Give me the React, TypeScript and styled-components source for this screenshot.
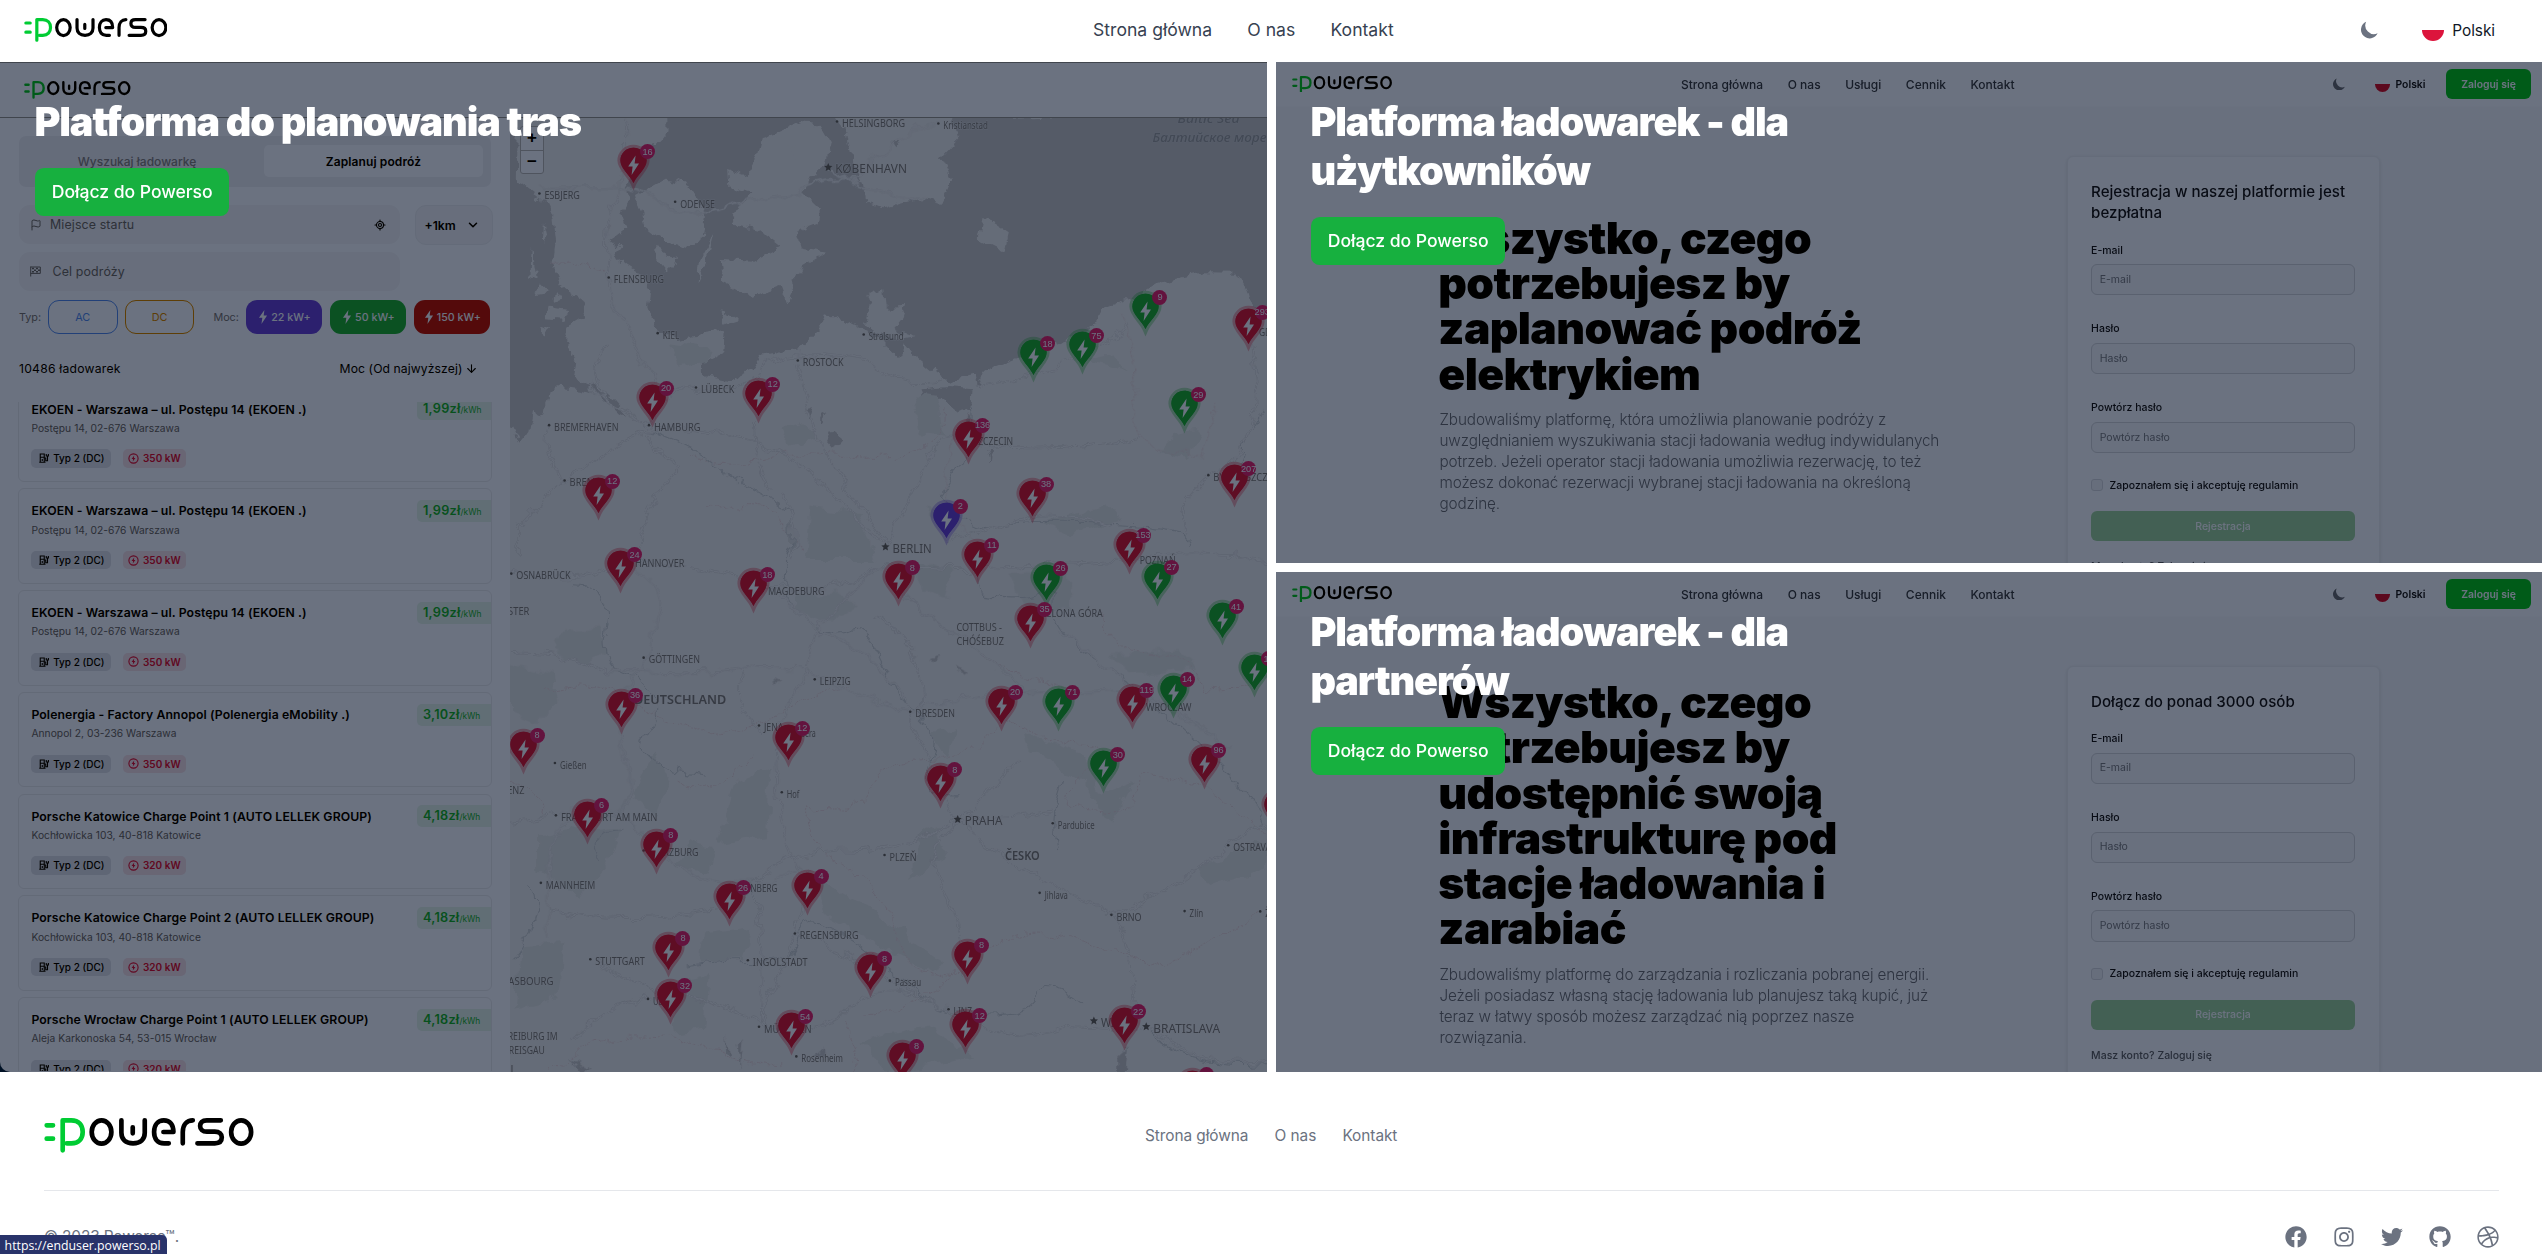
import React from "react";
import styled, { createGlobalStyle } from "styled-components";
import { Flag, LocateFixed, ChevronDown, ArrowDown } from "lucide-react";
import { FaFacebook, FaInstagram, FaTwitter, FaGithub, FaDribbble } from "react-icons/fa";

const GlobalStyle = createGlobalStyle`
  *, *::before, *::after { box-sizing: border-box; }
  html, body { margin: 0; background: #fff; }
  body { font-family: Inter, "Liberation Sans", sans-serif; overflow: hidden; }
`;

const Page = styled.div`
  width: 2542px;
  height: 1254px;
  overflow: hidden;
  display: flex;
  flex-direction: column;
  background: #fff;
`;

/* ---------- brand ---------- */

const LogoSvg = styled.svg<{ $w: number }>`
  display: block;
  flex: none;
  width: ${(p) => p.$w}px;
  height: ${(p) => (p.$w * 104) / 628}px;
  fill: none;
  stroke-linecap: round;
  stroke-linejoin: round;
`;

const Logo = ({ width }: { width: number }) => (
  <LogoSvg $w={width} viewBox="0 0 628 104" role="img" aria-label="Powerso">
    <g stroke="#00cc33" strokeWidth={14}>
      <path d="M8 22H27M8 62H27" />
      <path d="M56 97V7H82C104 7 116 22 116 42C116 62 104 76 82 76H68" />
    </g>
    <g stroke="#000" strokeWidth={14}>
      <ellipse cx="172.5" cy="42" rx="29.5" ry="35" />
      <path d="M232 7V44C232 64 245 76 267 76C289 76 302 64 302 44V7M266 28V46" />
      <path d="M374 76H360C340 76 330 62 330 42C330 20 342 7 359 7C378 7 388 20 388 42H358" />
      <path d="M416 76V42C416 20 428 7 446 7" />
      <path d="M530 7H488C474 7 468 15 468 24C468 34 475 41 488 41H512C526 41 533 48 533 58C533 70 526 76 512 76H460" />
      <ellipse cx="591" cy="42" rx="30" ry="35" />
    </g>
  </LogoSvg>
);

const MoonSvg = styled.svg<{ $s: number }>`
  width: ${(p) => p.$s}px;
  height: ${(p) => p.$s}px;
  flex: none;
`;
const Moon = ({ size, color }: { size: number; color: string }) => (
  <MoonSvg $s={size} viewBox="2 2 16 16" fill={color}>
    <path d="M17.293 13.293A8 8 0 016.707 2.707a8.001 8.001 0 1010.586 10.586z" />
  </MoonSvg>
);

const PolishFlag = styled.span<{ $s: number }>`
  width: ${(p) => p.$s}px;
  height: ${(p) => p.$s}px;
  flex: none;
  border-radius: 50%;
  background: linear-gradient(#fff 50%, #dc143c 50%);
`;

/* ---------- page header ---------- */

const Header = styled.header`
  height: 62px;
  flex: none;
  display: flex;
  align-items: center;
  padding: 0 47px 2px 23.5px;
`;
const HeaderNav = styled.nav`
  display: flex;
  gap: 35.2px;
  margin-left: 926px;
  margin-right: auto;
`;
const HeaderLink = styled.a`
  font-size: 17.6px;
  color: #374151;
  line-height: 26px;
`;
const HeaderLanguage = styled.div`
  display: flex;
  align-items: center;
  gap: 8.5px;
  margin-left: 43.5px;
  font-size: 15.4px;
  color: #111827;
  letter-spacing: -0.05px;
`;

/* ---------- hero panels ---------- */

const Panels = styled.main`
  flex: none;
  height: 1010px;
  display: grid;
  grid-template-columns: 1267px 1266px;
  column-gap: 9px;
`;
const RightColumn = styled.div`
  display: grid;
  grid-template-rows: 501px 500px;
  row-gap: 9px;
`;
const Panel = styled.section`
  position: relative;
  isolation: isolate;
  overflow: hidden;
  background: #fff;
`;
const Preview = styled.div`
  height: 100%;
  overflow: hidden;
`;
const PlannerFrame = styled.div`
  height: 100%;
  background: #00264a;
`;
const PlannerScreen = styled.div`
  height: 100%;
  overflow: hidden;
  background: #fff;
  border-bottom-left-radius: 10px;
`;
const Tint = styled.div`
  position: absolute;
  inset: 0;
  background: #6b7280;
  mix-blend-mode: multiply;
`;
const Caption = styled.div`
  position: absolute;
  inset: 0;
  padding: 35.8px 35.2px;
  display: flex;
  flex-direction: column;
  align-items: flex-start;
  gap: 21.4px;
`;
const CaptionTitle = styled.h1`
  margin: 0 0 0 -0.8px;
  font-size: 39.6px;
  line-height: 49px;
  font-weight: 900;
  letter-spacing: -1.1px;
  color: #fff;
  white-space: nowrap;
`;
const JoinButton = styled.a`
  height: 47.6px;
  width: 194px;
  display: flex;
  align-items: center;
  justify-content: center;
  border-radius: 8.8px;
  background: #17b03f;
  color: #fff;
  font-size: 17.6px;
  font-weight: 500;
  letter-spacing: -0.04px;
`;

/* ---------- planner preview ---------- */

const PlannerBar = styled.div`
  height: 56px;
  display: flex;
  align-items: flex-start;
  padding: 18px 24px 0;
  border-top: 1px solid #999;
  border-bottom: 1px solid #999;
`;
const PlannerBody = styled.div`
  display: flex;
  height: 954px;
`;
const Sidebar = styled.aside`
  width: 510px;
  flex: none;
  padding: 18px 0 0 19px;
  overflow: hidden;
  color: #000;
`;
const Tabs = styled.div`
  width: 472px;
  height: 51px;
  padding: 9px 8px 10px;
  display: grid;
  grid-template-columns: 220px 219px;
  gap: 17px;
  border-radius: 7px;
  background: #f1f1f4;
`;
const Tab = styled.div<{ $active?: boolean }>`
  display: flex;
  align-items: center;
  justify-content: center;
  border-radius: 5px;
  font-size: 12px;
  font-weight: ${(p) => (p.$active ? 600 : 500)};
  letter-spacing: ${(p) => (p.$active ? 0.1 : 0)}px;
  background: ${(p) => (p.$active ? "#fff" : "transparent")};
  color: ${(p) => (p.$active ? "#000" : "#85858c")};
`;
const FieldRow = styled.div<{ $top: number }>`
  display: flex;
  gap: 15px;
  margin-top: ${(p) => p.$top}px;
`;
const PlaceField = styled.div`
  width: 381px;
  height: 39px;
  padding: 0 14px 0 11px;
  display: flex;
  align-items: center;
  gap: 8px;
  border-radius: 11px;
  background: #f7f7f8;
  color: #6c6c70;
  font-size: 12.4px;
  letter-spacing: 0.12px;
`;
const FieldEnd = styled.span`
  margin-left: auto;
  display: flex;
  color: #000;
`;
const Radius = styled.div`
  width: 78px;
  height: 40px;
  display: flex;
  align-items: center;
  padding-left: 8.5px;
  gap: 10px;
  border-radius: 11px;
  border: 1px solid #efeff1;
  background: #f7f7f8;
  font-size: 12.2px;
  font-weight: 600;
`;
const FilterRow = styled.div`
  display: flex;
  align-items: center;
  margin-top: 9px;
  height: 34px;
  font-size: 10.8px;
  color: #77777c;
`;
const FilterLabel = styled.span<{ $w: number; $left?: number }>`
  width: ${(p) => p.$w}px;
  margin-left: ${(p) => p.$left ?? 0}px;
`;
const CurrentPill = styled.span<{ $c: string }>`
  width: 69.5px;
  height: 34px;
  margin-right: 7.3px;
  display: flex;
  align-items: center;
  justify-content: center;
  border: 1px solid ${(p) => p.$c};
  border-radius: 11px;
  color: ${(p) => p.$c};
`;
const PowerPill = styled.span<{ $c: string }>`
  width: 76px;
  height: 34px;
  margin-right: 8px;
  display: flex;
  align-items: center;
  justify-content: center;
  gap: 3px;
  border-radius: 11px;
  background: ${(p) => p.$c};
  color: #fff;
  font-size: 10.7px;
  font-weight: 500;
`;
const SortRow = styled.div`
  height: 68px;
  padding-right: 32px;
  width: 490px;
  display: flex;
  align-items: center;
  justify-content: space-between;
  font-size: 12.2px;
  letter-spacing: 0.08px;
`;
const StationCount = styled.span`
  letter-spacing: 0.22px;
`;
const SortBy = styled.span`
  display: flex;
  align-items: center;
  gap: 2.5px;
  margin-right: -1px;
`;
const StationList = styled.div`
  width: 474px;
  margin-left: -1px;
  height: 669px;
  overflow: hidden;
`;
const StationStack = styled.div`
  margin-top: -15.4px;
  display: flex;
  flex-direction: column;
  gap: 6.25px;
`;
const Station = styled.article`
  height: 95.5px;
  flex: none;
  display: flex;
  justify-content: space-between;
  border: 1px solid #ececee;
  border-radius: 6px;
  padding-left: 12.4px;
`;
const StationInfo = styled.div`
  padding-top: 13.9px;
`;
const StationName = styled.div`
  font-size: 12.25px;
  line-height: 16.4px;
  font-weight: 600;
  letter-spacing: 0.1px;
  white-space: nowrap;
`;
const StationAddress = styled.div`
  font-size: 10.25px;
  line-height: 20px;
  letter-spacing: 0.03px;
  color: #66666b;
`;
const Chips = styled.div`
  margin-top: 11.4px;
  display: flex;
  gap: 12px;
`;
const Chip = styled.span<{ $hot?: boolean }>`
  height: 18.4px;
  width: ${(p) => (p.$hot ? 63.7 : 79.3)}px;
  padding-left: ${(p) => (p.$hot ? 5.5 : 8)}px;
  display: flex;
  align-items: center;
  gap: 3.8px;
  border-radius: 5px;
  font-size: 10px;
  font-weight: ${(p) => (p.$hot ? 600 : 500)};
  background: ${(p) => (p.$hot ? "#f9e3e8" : "#e2e4e9")};
  color: ${(p) => (p.$hot ? "#e60f41" : "#000")};
  white-space: nowrap;
`;
const Price = styled.div`
  margin-top: 10.8px;
  height: 22px;
  width: 74px;
  padding-left: 6px;
  display: flex;
  align-items: baseline;
  line-height: 21px;
  border-radius: 5px 0 0 5px;
  background: #e6f5ea;
  color: #10b53a;
  font-size: 12.7px;
  font-weight: 600;
  letter-spacing: 0.25px;
`;
const Unit = styled.small`
  font-size: 8.4px;
  font-weight: 400;
  letter-spacing: 0;
`;

const Bolt = styled.svg`
  width: 10px;
  height: 14px;
`;
const BoltIcon = () => (
  <Bolt viewBox="0 0 11 19" fill="#fff">
    <path d="M7.4 0L0 10.6H4.6L3.4 19L11 7.6H6.4Z" />
  </Bolt>
);

const FinishFlag = () => (
  <svg width="11" height="11" viewBox="0 0 11 11" fill="none" stroke="#6c6c70">
    <path d="M0.7 0.5V10.5M0.7 1H10.3V7.4H0.7" />
    <path d="M2 2.6H4M6 2.6H8M4 4.2H6M8 4.2H10M2 5.8H4M6 5.8H8" strokeWidth="1.5" />
  </svg>
);

const ChargerIcon = () => (
  <svg width="10" height="10" viewBox="0 0 20 20" fill="none" stroke="currentColor" strokeWidth="2.2">
    <path d="M2.5 18V2H10.5V18M0.5 18.5H13M2.5 8.5H10.5M6.5 12V16" />
    <path d="M10.5 10H13.5V15.5H17V7M14.5 2V6H18.8V2" />
  </svg>
);

const PowerIcon = () => (
  <svg width="11" height="11" viewBox="0 0 22 22" fill="none" stroke="currentColor" strokeWidth="2.2">
    <circle cx="11" cy="11" r="9.2" />
    <path d="M12.4 4.8L7.2 12H10.2L9.6 17.2L14.8 10H11.8Z" fill="currentColor" stroke="none" />
  </svg>
);

const stations: [string, string, string, string][] = [
  ["EKOEN - Warszawa – ul. Postępu 14 (EKOEN .)", "Postępu 14, 02-676 Warszawa", "350 kW", "1,99"],
  ["EKOEN - Warszawa – ul. Postępu 14 (EKOEN .)", "Postępu 14, 02-676 Warszawa", "350 kW", "1,99"],
  ["EKOEN - Warszawa – ul. Postępu 14 (EKOEN .)", "Postępu 14, 02-676 Warszawa", "350 kW", "1,99"],
  ["Polenergia - Factory Annopol (Polenergia eMobility .)", "Annopol 2, 03-236 Warszawa", "350 kW", "3,10"],
  ["Porsche Katowice Charge Point 1 (AUTO LELLEK GROUP)", "Kochłowicka 103, 40-818 Katowice", "320 kW", "4,18"],
  ["Porsche Katowice Charge Point 2 (AUTO LELLEK GROUP)", "Kochłowicka 103, 40-818 Katowice", "320 kW", "4,18"],
  ["Porsche Wrocław Charge Point 1 (AUTO LELLEK GROUP)", "Aleja Karkonoska 54, 53-015 Wrocław", "320 kW", "4,18"],
];

/* ---------- map ---------- */

const MapBox = styled.div`
  position: relative;
  width: 757px;
  height: 954px;
  overflow: hidden;
  background: #f1f1ef;
`;
const MapSvg = styled.svg`
  display: block;
  width: 757px;
  height: 954px;
`;
const ZoomControl = styled.div`
  position: absolute;
  left: 10px;
  top: 8px;
  width: 24px;
  height: 48px;
  display: grid;
  grid-template-rows: 1fr 1fr;
  border: 1px solid #bbb;
  border-radius: 3px;
  background: #fff;
  font: 700 17px/22px "Liberation Sans", sans-serif;
  text-align: center;
`;
const ZoomKey = styled.span`
  & + & { border-top: 1px solid #bbb; }
`;
const Pin = styled.div`
  position: absolute;
  width: 33px;
  height: 44px;
`;
const PinSvg = styled.svg`
  display: block;
  width: 33px;
  height: 44px;
  overflow: visible;
`;
const PinCount = styled.span`
  position: absolute;
  left: 23px;
  top: 0px;
  width: 15px;
  height: 15px;
  border-radius: 50%;
  display: flex;
  align-items: center;
  justify-content: center;
  background: #ec2a7c;
  color: #fff;
  font: 9.2px "Liberation Sans", Arial, sans-serif;
`;

/* Two tracing grids: the northern and the southern half of the map. */
type Half = "n" | "s";
const mx = (x: number) => x / 2.063;
const my = (h: Half, y: number) => (h === "n" ? y / 3 - 58 : y / 2.904 + 422);

const R = "#e11d48";
const G = "#18b544";
const B = "#6747dc";
const pins: [Half, number, number, string, string][] = [
  ["n", 255, 370, R, "16"], ["n", 1312, 806, G, "9"], ["n", 1523, 851, R, "293"], ["n", 1181, 922, G, "75"],
  ["n", 1080, 946, G, "18"], ["n", 1391, 1098, G, "29"], ["n", 293, 1079, R, "20"], ["n", 513, 1067, R, "12"],
  ["n", 946, 1190, R, "136"], ["n", 182, 1358, R, "12"], ["n", 1077, 1367, R, "38"], ["n", 1495, 1320, R, "207"],
  ["n", 900, 1433, B, "2"], ["s", 228, 134, R, "24"], ["s", 502, 192, R, "18"], ["s", 801, 172, R, "8"],
  ["s", 965, 107, R, "11"], ["s", 1107, 173, G, "26"], ["s", 1277, 77, R, "153"], ["s", 1336, 170, G, "27"],
  ["s", 1469, 285, G, "41"], ["s", 1074, 293, R, "35"], ["s", 1536, 437, G, "17"], ["s", 1285, 528, R, "119"],
  ["s", 1368, 496, G, "14"], ["s", 1131, 533, G, "71"], ["s", 1013, 533, R, "20"], ["s", 229, 543, R, "36"],
  ["s", 574, 638, R, "12"], ["s", 27, 658, R, "8"], ["s", 1225, 715, G, "30"], ["s", 1433, 702, R, "96"],
  ["s", 889, 758, R, "8"], ["s", 160, 862, R, "6"], ["s", 303, 949, R, "8"], ["s", 452, 1101, R, "26"],
  ["s", 613, 1068, R, "4"], ["s", 328, 1248, R, "8"], ["s", 744, 1308, R, "8"], ["s", 944, 1268, R, "8"],
  ["s", 332, 1386, R, "32"], ["s", 580, 1476, R, "54"], ["s", 940, 1473, R, "12"], ["s", 1267, 1461, R, "22"],
  ["s", 810, 1562, R, "8"], ["s", 1409, 1644, R, "8"], ["s", 1584, 834, R, "8"],
];

/* half, text, left, middle, width, kind */
const towns: [Half, string, number, number, number, ("c" | "t" | "k" | "n" | "x")?][] = [
  ["n", "HELSINGBORG", 685, 191, 130, "t"], ["n", "Kristianstad", 894, 197, 92, "t"], ["n", "KØBENHAVN", 671, 327, 148, "k"],
  ["n", "ESBJERG", 71, 407, 73], ["n", "ODENSE", 351, 432, 72], ["n", "FLENSBURG", 214, 659, 104], ["n", "KIEL", 315, 826, 34],
  ["n", "Stralsund", 740, 830, 72], ["n", "ROSTOCK", 604, 908, 84], ["n", "LÜBECK", 394, 989, 69], ["n", "HAMBURG", 297, 1102, 96],
  ["n", "BREMERHAVEN", 91, 1102, 133], ["n", "SZCZECIN", 956, 1145, 82, "x"], ["n", "BREMEN", 123, 1268, 78], ["n", "BYDGOSZCZ", 1451, 1252, 112],
  ["n", "GDAŃSK", 1545, 817, 70, "x"],
  ["s", "BERLIN", 789, 25, 81, "k"], ["s", "OSNABRÜCK", 13, 104, 112], ["s", "HANNOVER", 258, 69, 102, "x"], ["s", "MAGDEBURG", 532, 150, 117, "x"],
  ["s", "POZNAŃ", 1299, 59, 74, "x"], ["s", "MÜNSTER", -50, 207, 90, "x"], ["s", "COTTBUS -", 921, 254, 94, "x"], ["s", "CHÓŚEBUZ", 921, 295, 98, "x"],
  ["s", "ZIELONA GÓRA", 1090, 214, 133, "x"], ["s", "GÖTTINGEN", 286, 348, 106], ["s", "LEIPZIG", 639, 411, 64], ["s", "DEUTSCHLAND", 256, 463, 190, "n"],
  ["s", "WROCŁAW", 1312, 486, 94, "x"], ["s", "DRESDEN", 836, 505, 82], ["s", "JENA", 524, 545, 40], ["s", "Gera", 598, 561, 33, "x"],
  ["s", "Gießen", 103, 654, 55], ["s", "KOBLENZ", -54, 728, 84, "x"], ["s", "Hof", 571, 739, 26], ["s", "FRANKFURT AM MAIN", 105, 806, 199],
  ["s", "PRAHA", 938, 816, 78, "k"], ["s", "Pardubice", 1130, 829, 76], ["s", "OSTRAVA", 1492, 893, 78], ["s", "WÜRZBURG", 286, 908, 103],
  ["s", "PLZEŇ", 783, 921, 56], ["s", "ČESKO", 1021, 917, 72, "n"], ["s", "MANNHEIM", 74, 1002, 102], ["s", "NÜRNBERG", 460, 1013, 92, "x"],
  ["s", "Jihlava", 1103, 1031, 48], ["s", "BRNO", 1251, 1095, 52], ["s", "Zlín", 1402, 1084, 28], ["s", "Ž", 1558, 1085, 10], ["s", "REGENSBURG", 598, 1149, 121],
  ["s", "STUTTGART", 176, 1224, 102], ["s", "INGOLSTADT", 501, 1227, 113], ["s", "STRASBOURG", -38, 1283, 128, "x"], ["s", "Passau", 794, 1286, 54],
  ["s", "ULM", 295, 1339, 34], ["s", "LINZ", 915, 1369, 38], ["s", "WIEN", 1219, 1401, 58, "k"], ["s", "BRATISLAVA", 1327, 1418, 138, "k"],
  ["s", "MÜNCHEN", 524, 1420, 98], ["s", "FREIBURG IM", -14, 1442, 112, "x"], ["s", "BREISGAU", -14, 1483, 86, "x"], ["s", "Rosenheim", 601, 1506, 86],
  ["s", "BASEL", -50, 1536, 62, "x"],
];

const roads: [Half, string][] = [
  ["n", "M235 180Q250 260 225 360L225 400Q195 470 200 580T210 720Q250 810 270 900Q320 1000 285 1095"],
  ["n", "M60 385L215 382Q280 385 320 440L410 460Q500 410 600 400Q610 350 720 360M655 325Q730 410 860 412M720 350Q760 260 885 185"],
  ["n", "M285 1095Q200 1050 165 970M285 1100Q330 960 385 985Q470 1010 520 930T740 905Q780 990 900 960"],
  ["n", "M110 1265Q180 1190 285 1110M285 1110Q400 1100 510 1150T720 1390L775 1460M590 905Q620 1100 650 1180Q700 1300 775 1450"],
  ["n", "M80 1095Q60 1170 110 1265M285 1120Q300 1180 350 1220Q280 1330 260 1500M500 1080Q500 1200 540 1290"],
  ["n", "M775 1460Q830 1300 860 1200T960 1150M960 980Q1030 960 1080 945T1280 800M960 1150Q1130 1180 1300 1130"],
  ["n", "M1530 860Q1550 1000 1530 1100T1440 1250Q1370 1330 1400 1420M900 1440Q1000 1400 1080 1370Q1170 1360 1250 1400"],
  ["n", "M555 1290Q600 1380 580 1500M110 1265Q60 1330 20 1400V1500M200 1020Q150 930 200 850"],
  ["s", "M0 95Q150 130 230 70Q350 60 500 120T780 70Q900 90 1030 80T1270 60Q1400 20 1560 60"],
  ["s", "M230 70Q320 120 310 200T270 380Q200 480 240 640T150 820Q60 840 80 1000V1160"],
  ["s", "M270 380Q400 390 480 370T640 400T820 500Q900 460 1010 450T1290 430Q1400 520 1480 600"],
  ["s", "M780 70Q690 160 650 240T610 400Q540 500 550 700T600 960Q520 1010 430 990T270 850T100 790"],
  ["s", "M820 500Q860 620 920 800Q840 900 700 900T500 1000Q530 1200 520 1400M920 800Q1010 820 1120 790"],
  ["s", "M920 810Q1010 930 1120 1000T1240 1090Q1290 1160 1290 1400M920 810Q1000 740 1040 640"],
  ["s", "M80 1070Q200 1110 340 1090T500 1010M170 1220Q280 1300 350 1320T520 1400T700 1360T910 1370T1150 1410L1320 1420"],
  ["s", "M590 1140Q700 1200 790 1280T910 1360M590 1140Q560 1250 520 1400M1240 1090Q1350 1040 1480 890L1560 820"],
  ["s", "M820 500Q800 380 690 300T560 150M780 70Q820 200 920 270Q1000 350 1060 440M1130 260Q1200 330 1280 430"],
  ["s", "M0 330Q100 320 200 380L280 380M480 370Q450 480 520 560M620 960Q600 1060 590 1140M0 820L90 800"],
  ["s", "M285 1330Q200 1340 130 1450M1320 1420Q1420 1540 1560 1510M940 1260Q930 1100 890 1000T920 820M750 220Q860 300 850 500"],
];
const rivers: [Half, string][] = [
  ["n", "M285 1110Q380 1160 430 1220T580 1350V1500"],
  ["n", "M950 1040Q960 1160 890 1300Q940 1420 1000 1400T1240 1390T1400 1450"],
  ["n", "M1555 1050Q1500 1160 1510 1250"],
  ["s", "M580 0Q540 150 600 220T700 260T800 460Q900 540 870 640T920 740"],
  ["s", "M1290 430L1180 320Q1100 220 1120 150Q1060 180 970 160L960 60"],
  ["s", "M1290 430Q1400 560 1470 660T1560 830M240 840Q150 830 190 930"],
  ["s", "M40 1000Q80 1080 0 1220M360 1240Q450 1220 520 1225T600 1140T760 1220T910 1370"],
  ["s", "M930 1370Q1060 1400 1080 1330T1180 1350M1320 1430Q1400 1540 1560 1520M1140 700Q1110 820 1130 900"],
  ["s", "M130 130Q220 140 200 260T260 400Q330 470 280 560T400 680"],
];
const borders: [Half, string][] = [
  ["n", "M90 610Q140 605 195 640"],
  ["n", "M950 1060Q900 1160 900 1270T960 1450M1260 760Q1300 900 1290 1050T1430 1180L1460 1020"],
  ["n", "M370 1190Q470 1230 510 1200T720 1190T900 1050M400 1350Q520 1310 560 1370L600 1480"],
  ["s", "M1015 520Q960 640 860 640T740 720T620 770Q590 860 690 950T800 1150T910 1270Q950 1230 1000 1180Q1060 1130 1140 1150T1320 1240Q1450 1180 1540 1080"],
  ["s", "M1020 520Q1130 600 1200 600T1180 690T1260 790Q1300 730 1300 680Q1440 700 1480 770L1560 850"],
  ["s", "M70 440Q180 400 240 460T400 560Q480 560 560 500T700 420M350 700Q420 760 500 620"],
  ["s", "M690 1400Q740 1500 700 1540M730 1380Q840 1360 910 1270M970 330Q1060 420 1180 430M0 700Q90 760 70 800"],
  ["s", "M90 1540Q160 1440 260 1440T420 1480T560 1530M1210 200Q1240 330 1320 330T1420 400T1560 400"],
];
const woods: [Half, string][] = [
  ["n", "M330 850L420 870L410 900L350 920ZM560 1100L600 1080L640 1130L580 1160ZM830 1000L850 1120L900 1130L880 1010ZM1370 1120L1420 1110L1400 1200L1340 1180Z"],
  ["n", "M1100 1390L1230 1330L1260 1380L1150 1420ZM860 1340L930 1360L900 1420ZM620 1340L720 1360L760 1500H610ZM1180 900L1250 880L1270 930Z"],
  ["s", "M110 260L190 250L200 330L150 360L90 320ZM590 160L680 150L720 190L660 240L590 210ZM0 360L90 390L100 470L50 540L0 500Z"],
  ["s", "M840 60L920 90L900 170L850 150ZM1030 100L1150 90L1160 200L1060 190ZM1240 330L1380 320L1420 370L1280 390Z"],
  ["s", "M300 620L330 700L300 800L250 740ZM470 700L540 660L530 860L430 880ZM870 560L920 540L900 640Z"],
  ["s", "M60 860L230 830L200 950L140 1040L60 960ZM620 970L720 1050L900 1230L860 1250L640 1080ZM400 1140L500 1120L480 1220L390 1230Z"],
  ["s", "M20 1180L110 1170L100 1330L10 1360ZM1060 560L1180 620L1220 740L1290 700L1240 830L1190 720L1070 610ZM330 1290L410 1260L400 1420L340 1430Z"],
  ["s", "M840 850L880 830L900 920L830 990ZM720 1450L860 1410L960 1500L780 1545ZM1420 950L1560 870L1560 960L1440 1000ZM370 880L420 900L410 960L340 950Z"],
];

const halfTransform = (h: Half) => (h === "n" ? "translate(0 -58) scale(.4847 .3333)" : "translate(0 422) scale(.4847 .3444)");

const MapDrawing = () => (
  <MapSvg viewBox="0 0 757 954">
    <defs>
      <filter id="coast" x="-5%" y="-5%" width="110%" height="110%">
        <feTurbulence type="fractalNoise" baseFrequency="0.09" numOctaves="3" seed="4" />
        <feDisplacementMap in="SourceGraphic" scale="11" xChannelSelector="R" yChannelSelector="G" />
      </filter>
      <filter id="grain" x="-5%" y="-5%" width="110%" height="110%">
        <feTurbulence type="fractalNoise" baseFrequency="0.06" numOctaves="3" seed="9" />
        <feDisplacementMap in="SourceGraphic" scale="16" xChannelSelector="R" yChannelSelector="G" />
      </filter>
    </defs>
    <g filter="url(#coast)">
      <g transform={halfTransform("n")}>
        <path
          fill="#c9cbce"
          d="M-40 130H1620V800L1562 760L1530 740L1520 690L1500 638L1430 637L1340 668L1290 712L1225 745L1200 800L1170 830L1100 865L1040 900L960 945L905 965L880 940L835 885L815 850L800 890L770 850L760 830L700 790L650 765L640 800L600 860L520 885L500 930L450 960L400 945L400 905L440 880L443 810L400 820L350 840L300 800L285 740L290 690L275 650L240 620L215 590L230 560L205 540L240 500L230 460L245 420L235 380L250 340L235 300L300 260L323 220L322 130H15L12 360L40 390L75 430L90 480L95 540L88 610L110 680L150 720L155 770L120 800L118 840L135 900L130 950L160 972L190 985L215 1020L245 1070L283 1095L225 1058L190 1008L150 990L95 978L80 1000L70 1065L50 1050L42 1110L20 1150L5 1100L-40 1062Z"
        />
        <g fill="#f1f1ef">
          <path d="M262 405L315 362L365 375L385 420L402 470L395 540L372 562L320 545L280 500L270 450Z" />
          <path d="M452 330L485 345L512 280L520 230L552 215L600 185L640 195L662 250L652 320L622 350L605 400L640 450L635 490L590 515L600 565L652 578L602 622L590 660L568 728L556 680L500 710L440 665L435 600L500 605L560 560L515 510L455 490L470 440L500 400L455 380Z" />
          <path d="M655 140H905L925 235L890 290L912 360L890 432L850 415L770 445L735 425L730 370L705 300L695 220ZM1035 140H1130V172L1040 176Z" />
          <path d="M422 520L404 620L387 672L392 600ZM436 750L474 782L445 795ZM975 467L1029 520L1020 575L965 535Z" />
          <path d="M772 690L775 740L817 738L808 780L792 810L832 832L800 840L762 820L732 790L742 740L735 705ZM300 560L345 600L320 635L300 600Z" />
          <path d="M70 490L78 540L68 545ZM45 560L55 660L42 650ZM60 670L80 700L55 705ZM95 690L110 720L92 725ZM80 740L120 750L110 780L75 775ZM60 800L85 810L70 830Z" />
          <path d="M540 230L580 250L590 300L560 290ZM338 355L372 380L350 390Z" />
        </g>
        <path fill="#c9cbce" d="M845 985L905 978L952 985L950 1045L920 1055L890 1020L850 1012ZM945 1055L955 1100L940 1100ZM960 930L980 930L965 990ZM610 1050L625 1045L618 1080ZM660 1110L690 1145L665 1165L650 1140ZM785 240L805 240L795 262ZM640 1070L655 1060L640 1090ZM985 1170L995 1170L992 1210ZM1375 1000L1395 990L1390 1020Z" />
      </g>
      <path fill="#c9cbce" transform={halfTransform("s")} d="M445 1440L452 1500L446 1500ZM470 1460L480 1450L474 1535ZM630 1495L648 1475L650 1495ZM1255 1500L1275 1475L1270 1545H1255ZM120 1500L170 1540H150ZM915 368L945 385L935 392ZM860 350L885 335L880 355ZM545 405L560 412L550 418Z" />
    </g>
    <g filter="url(#grain)">
      {woods.map(([h, d], i) => (
        <path key={i} d={d} fill="#e5e8e6" transform={halfTransform(h)} />
      ))}
    </g>
    <g filter="url(#grain)" fill="none" strokeLinejoin="round">
      {borders.map(([h, d], i) => (
        <path key={i} d={d} stroke="#ead9dc" strokeWidth={1} strokeDasharray="3 1.5" vectorEffect="non-scaling-stroke" transform={halfTransform(h)} />
      ))}
      {rivers.map(([h, d], i) => (
        <path key={i} d={d} stroke="#cdd3d6" strokeWidth={1.1} vectorEffect="non-scaling-stroke" transform={halfTransform(h)} />
      ))}
      {roads.map(([h, d], i) => (
        <g key={i} transform={halfTransform(h)}>
          <path d={d} stroke="#dddedf" strokeWidth={2.6} vectorEffect="non-scaling-stroke" />
          <path d={d} stroke="#f3f3f2" strokeWidth={1.2} vectorEffect="non-scaling-stroke" />
        </g>
      ))}
    </g>
    <g fontFamily='"Noto Sans", "Open Sans", sans-serif' stroke="#f1f1ef" strokeOpacity={0.5} strokeWidth={1.2} paintOrder="stroke" fill="#808286">
      {towns.map(([h, name, x, y, w, kind = "c"]) => {
        const size = kind === "k" ? 12 : kind === "n" ? 12.4 : 10;
        const X = mx(x);
        const Y = my(h, y);
        return (
          <g key={name}>
            {kind === "c" || kind === "t" ? <circle cx={X - 5} cy={Y - 2.2} r={1.3} fill="#66686c" stroke="none" /> : null}
            {kind === "k" ? (
              <path stroke="none" fill="#66686c" d={`M${X - 7} ${Y - 6}l1.2 2.7 2.9.3-2.2 2 .7 3-2.6-1.6-2.6 1.6.7-3-2.2-2 2.9-.3z`} />
            ) : null}
            <text x={X} y={Y + size * 0.36} fontSize={size} fontWeight={kind === "n" ? 600 : 400} textLength={mx(w)} lengthAdjust="spacingAndGlyphs">
              {name}
            </text>
          </g>
        );
      })}
      <g fontStyle="italic" fill="#9da2a9" stroke="#d6d8da" fontWeight={500}>
        <text x={667.5} y={4.5} fontSize={12} textLength={62} lengthAdjust="spacingAndGlyphs">Baltic Sea</text>
        <text x={642.5} y={23.8} fontSize={12} textLength={114} lengthAdjust="spacingAndGlyphs">Балтийское море</text>
      </g>
    </g>
  </MapSvg>
);

const pinShape = "M16.5 39C13 31 3.4 24.5 3.4 16.6A13.1 12.8 0 0 1 29.6 16.6C29.6 24.5 20 31 16.5 39Z";

const StationMap = () => (
  <MapBox>
    <MapDrawing />
    <ZoomControl>
      <ZoomKey>+</ZoomKey>
      <ZoomKey>−</ZoomKey>
    </ZoomControl>
    {pins.map(([h, x, y, color, count]) => (
      <Pin key={`${h}${x}-${y}`} style={{ left: mx(x) - 16.5, top: my(h, y) - 39 }}>
        <PinSvg viewBox="0 0 33 44">
          <path d={pinShape} fill={color} stroke={color} strokeOpacity={0.32} strokeWidth={6} paintOrder="stroke" />
          <path d={pinShape} fill={color} />
          <path d="M18.6 11.4L11.2 22.4H15.6L14.6 31L22 19.4H17.6Z" fill="#fff" />
        </PinSvg>
        <PinCount>{count}</PinCount>
      </Pin>
    ))}
  </MapBox>
);

const PlannerPreview = () => (
  <PlannerFrame>
    <PlannerScreen>
      <PlannerBar>
        <Logo width={106.5} />
      </PlannerBar>
      <PlannerBody>
        <Sidebar>
          <Tabs>
            <Tab>Wyszukaj ładowarkę</Tab>
            <Tab $active>Zaplanuj podróż</Tab>
          </Tabs>
          <FieldRow $top={18}>
            <PlaceField>
              <Flag size={12} />
              Miejsce startu
              <FieldEnd>
                <LocateFixed size={12} strokeWidth={2.2} />
              </FieldEnd>
            </PlaceField>
            <Radius>
              +1km
              <ChevronDown size={14} strokeWidth={2.6} />
            </Radius>
          </FieldRow>
          <FieldRow $top={7}>
            <PlaceField>
              <FinishFlag />
              <span>&nbsp;Cel podróży</span>
            </PlaceField>
          </FieldRow>
          <FilterRow>
            <FilterLabel $w={29}>Typ:</FilterLabel>
            <CurrentPill $c="#4f8ff0">AC</CurrentPill>
            <CurrentPill $c="#e08a0c">DC</CurrentPill>
            <FilterLabel $w={33} $left={11.8}>Moc:</FilterLabel>
            <PowerPill $c="#6747dc"><BoltIcon />22 kW+</PowerPill>
            <PowerPill $c="#18b544"><BoltIcon />50 kW+</PowerPill>
            <PowerPill $c="#c81616"><BoltIcon />150 kW+</PowerPill>
          </FilterRow>
          <SortRow>
            <StationCount>10486 ładowarek</StationCount>
            <SortBy>
              Moc (Od najwyższej)
              <ArrowDown size={13} />
            </SortBy>
          </SortRow>
          <StationList>
            <StationStack>
              {stations.map(([name, address, power, price], i) => (
                <Station key={i}>
                  <StationInfo>
                    <StationName>{name}</StationName>
                    <StationAddress>{address}</StationAddress>
                    <Chips>
                      <Chip><ChargerIcon />Typ 2 (DC)</Chip>
                      <Chip $hot><PowerIcon />{power}</Chip>
                    </Chips>
                  </StationInfo>
                  <Price>{price}zł<Unit>/kWh</Unit></Price>
                </Station>
              ))}
            </StationStack>
          </StationList>
        </Sidebar>
        <StationMap />
      </PlannerBody>
    </PlannerScreen>
  </PlannerFrame>
);

/* ---------- landing page preview ---------- */

const SiteBar = styled.div`
  height: 45px;
  display: flex;
  align-items: center;
  padding: 0 11px 0 16.4px;
  background: #fff;
  border-bottom: 1px solid #fcfcfd;
`;
const SiteNav = styled.nav`
  display: flex;
  gap: 24.6px;
  margin-left: 288.5px;
  margin-right: auto;
  font-size: 12px;
  font-weight: 500;
  color: #374151;
`;
const SiteLanguage = styled.div`
  display: flex;
  align-items: center;
  gap: 5px;
  margin: 0 20.5px 0 30px;
  font-size: 10.4px;
  font-weight: 600;
  color: #111827;
`;
const LoginButton = styled.span`
  width: 85px;
  height: 30.6px;
  display: flex;
  align-items: center;
  justify-content: center;
  border-radius: 6px;
  background: #00cc30;
  color: #fff;
  font-size: 10.4px;
  font-weight: 600;
`;
const SiteBody = styled.div`
  height: 460px;
  display: flex;
  background: #f9fafb;
`;
const Pitch = styled.div<{ $top: number }>`
  width: 627px;
  flex: none;
  padding: ${(p) => p.$top}px 0 0;
  margin-left: 163.5px;
`;
const PitchTitle = styled.h2`
  margin: 0 0 12.4px -1.2px;
  font-size: 44.4px;
  line-height: 45.2px;
  font-weight: 900;
  letter-spacing: -0.6px;
  color: #000;
  white-space: nowrap;
`;
const PitchText = styled.p`
  margin: 0;
  font-size: 15.3px;
  line-height: 21.1px;
  font-weight: 300;
  letter-spacing: -0.14px;
  color: #6b7280;
  white-space: nowrap;
`;
const SignUp = styled.div`
  width: 313px;
  height: 480px;
  flex: none;
  margin-top: 49px;
  padding: 23.5px 23.6px;
  border: 1px solid #f0f1f3;
  border-radius: 6px;
  background: #fff;
  box-shadow: 0 1px 3px rgba(0, 0, 0, 0.1);
  color: #111827;
  font-size: 10.5px;
  font-weight: 500;
`;
const SignUpTitle = styled.h3`
  margin: 0 0 19.5px;
  font-size: 15.1px;
  line-height: 21.3px;
  font-weight: 500;
`;
const Field = styled.label`
  display: block;
  line-height: 16px;
  margin-bottom: 26px;
`;
const FakeInput = styled.span`
  display: flex;
  align-items: center;
  height: 31.5px;
  margin-top: 5.4px;
  padding-left: 7.6px;
  border: 1px solid #d5d8dd;
  border-radius: 6px;
  background: #f9fafb;
  color: #7b818e;
  font-weight: 400;
`;
const Consent = styled.div`
  display: flex;
  align-items: center;
  gap: 6.5px;
  height: 12px;
  white-space: nowrap;
`;
const Box = styled.span`
  width: 12px;
  height: 12px;
  border: 1px solid #d9dce1;
  border-radius: 3px;
  background: #f5f6f8;
`;
const SubmitButton = styled.div`
  margin-top: 20px;
  height: 30px;
  display: flex;
  align-items: center;
  justify-content: center;
  border-radius: 6px;
  background: #a0d6a8;
  color: #fff;
`;
const SignInHint = styled.div`
  margin-top: 17.8px;
  line-height: 16px;
  color: #5c6471;
`;

const Lines = ({ of }: { of: string[] }) => (
  <>
    {of.map((line, i) => (
      <React.Fragment key={line}>
        {i > 0 && <br />}
        {line}
      </React.Fragment>
    ))}
  </>
);

type SiteProps = { top: number; title: string[]; text: string[]; form: string[] };

const SitePreview = ({ top, title, text, form }: SiteProps) => (
  <Preview>
    <SiteBar>
      <Logo width={100} />
      <SiteNav>
        {["Strona główna", "O nas", "Usługi", "Cennik", "Kontakt"].map((item) => (
          <span key={item}>{item}</span>
        ))}
      </SiteNav>
      <Moon size={12.4} color="#6b7280" />
      <SiteLanguage>
        <PolishFlag $s={15.5} />
        Polski
      </SiteLanguage>
      <LoginButton>Zaloguj się</LoginButton>
    </SiteBar>
    <SiteBody>
      <Pitch $top={top}>
        <PitchTitle><Lines of={title} /></PitchTitle>
        <PitchText><Lines of={text} /></PitchText>
      </Pitch>
      <SignUp>
        <SignUpTitle><Lines of={form} /></SignUpTitle>
        {["E-mail", "Hasło", "Powtórz hasło"].map((label) => (
          <Field key={label}>
            {label}
            <FakeInput>{label}</FakeInput>
          </Field>
        ))}
        <Consent>
          <Box />
          Zapoznałem się i akceptuję regulamin
        </Consent>
        <SubmitButton>Rejestracja</SubmitButton>
        <SignInHint>Masz konto? Zaloguj się</SignInHint>
      </SignUp>
    </SiteBody>
  </Preview>
);

const HeroPanel = ({ title, children }: { title: string[]; children: React.ReactNode }) => (
  <Panel>
    {children}
    <Tint />
    <Caption>
      <CaptionTitle><Lines of={title} /></CaptionTitle>
      <JoinButton>Dołącz do Powerso</JoinButton>
    </Caption>
  </Panel>
);

/* ---------- footer ---------- */

const Footer = styled.footer`
  flex: 1;
  padding: 46px 43px 0 44px;
  color: #6b7280;
  font-size: 15.4px;
`;
const FooterTop = styled.div`
  height: 72px;
  display: flex;
  align-items: flex-start;
`;
const FooterNav = styled.nav`
  display: flex;
  gap: 26.2px;
  margin-left: 891.5px;
  line-height: 35px;
  letter-spacing: -0.06px;
`;
const FooterBottom = styled.div`
  height: 92.5px;
  border-top: 1px solid #e5e7eb;
  display: flex;
  align-items: center;
  justify-content: space-between;
`;
const Copyright = styled.span`
  letter-spacing: -0.14px;
`;
const Socials = styled.div`
  display: flex;
  gap: 26px;
  font-size: 22px;
`;
const StatusBubble = styled.div`
  position: fixed;
  left: 0;
  bottom: 0;
  width: 167px;
  height: 19.5px;
  padding-left: 4.6px;
  border-top-right-radius: 5px;
  background: #29336a;
  color: #fff;
  font: 12.3px/22px "Open Sans", "Noto Sans", sans-serif;
  white-space: nowrap;
  overflow: hidden;
`;

export default function App() {
  return (
    <Page>
      <GlobalStyle />
      <Header>
        <Logo width={143.5} />
        <HeaderNav>
          <HeaderLink>Strona główna</HeaderLink>
          <HeaderLink>O nas</HeaderLink>
          <HeaderLink>Kontakt</HeaderLink>
        </HeaderNav>
        <Moon size={17.4} color="#6b7280" />
        <HeaderLanguage>
          <PolishFlag $s={22} />
          Polski
        </HeaderLanguage>
      </Header>
      <Panels>
        <HeroPanel title={["Platforma do planowania tras"]}>
          <PlannerPreview />
        </HeroPanel>
        <RightColumn>
          <HeroPanel title={["Platforma ładowarek - dla", "użytkowników"]}>
            <SitePreview
              top={108.9}
              title={["Wszystko, czego", "potrzebujesz by", "zaplanować podróż", "elektrykiem"]}
              text={[
                "Zbudowaliśmy platformę, która umożliwia planowanie podróży z",
                "uwzględnianiem wyszukiwania stacji ładowania według indywidulanych",
                "potrzeb. Jeżeli operator stacji ładowania umożliwia rezerwację, to też",
                "możesz dokonać rezerwacji wybranej stacji ładowania na określoną",
                "godzinę.",
              ]}
              form={["Rejestracja w naszej platformie jest", "bezpłatna"]}
            />
          </HeroPanel>
          <HeroPanel title={["Platforma ładowarek - dla", "partnerów"]}>
            <SitePreview
              top={63.2}
              title={["Wszystko, czego", "potrzebujesz by", "udostępnić swoją", "infrastrukturę pod", "stacje ładowania i", "zarabiać"]}
              text={[
                "Zbudowaliśmy platformę do zarządzania i rozliczania pobranej energii.",
                "Jeżeli posiadasz własną stację ładowania lub planujesz taką kupić, już",
                "teraz w łatwy sposób możesz zarządzać nią poprzez nasze",
                "rozwiązania.",
              ]}
              form={["Dołącz do ponad 3000 osób"]}
            />
          </HeroPanel>
        </RightColumn>
      </Panels>
      <Footer>
        <FooterTop>
          <Logo width={209.5} />
          <FooterNav>
            <a>Strona główna</a>
            <a>O nas</a>
            <a>Kontakt</a>
          </FooterNav>
        </FooterTop>
        <FooterBottom>
          <Copyright>© 2023 Powerso™.</Copyright>
          <Socials>
            <FaFacebook />
            <FaInstagram />
            <FaTwitter />
            <FaGithub />
            <FaDribbble />
          </Socials>
        </FooterBottom>
      </Footer>
      <StatusBubble>https://enduser.powerso.pl</StatusBubble>
    </Page>
  );
}
